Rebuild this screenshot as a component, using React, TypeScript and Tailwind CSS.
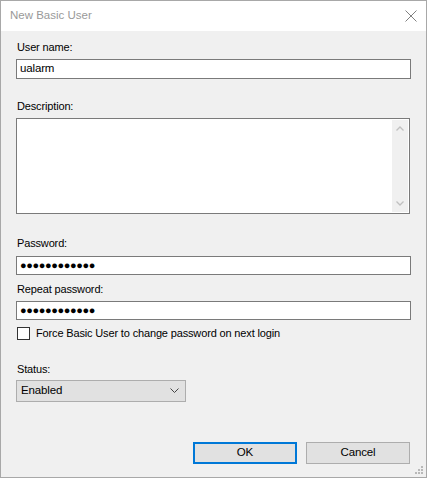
const font = { fontFamily: '"Liberation Sans", Arial, sans-serif' };

function Dots() {
  return <span className="tracking-[-0.4px] text-[11px]">{"●".repeat(12)}</span>;
}

export default function App() {
  return (
    <div
      className="relative w-[427px] h-[478px] border border-[#a8a8a8] bg-[#f0f0f0] text-[11px] tracking-[-0.15px] text-black flex flex-col"
      style={font}
    >
      <div className="h-[30px] bg-white flex items-center justify-between pl-[9px] pr-[9px] shrink-0">
        <span className="text-[11.5px] tracking-[0px] text-[#999999]">New Basic User</span>
        <svg width="12" height="12" viewBox="0 0 12 12">
          <path d="M0.5 0.5 L11.5 11.5 M11.5 0.5 L0.5 11.5" stroke="#808080" strokeWidth="1" />
        </svg>
      </div>

      <div className="flex flex-col px-[15px] pt-[9px]">
        <label className="leading-[14px] pl-[1px]">User name:</label>
        <div className="mt-[5px] h-[20px] w-[395px] border border-[#7a7a7a] bg-white flex items-center pl-[3px] text-[11.5px]">
          ualarm
        </div>

        <label className="mt-[20px] leading-[14px] pl-[1px]">Description:</label>
        <div className="mt-[5px] h-[96px] w-[394px] border border-[#7a7a7a] bg-white flex justify-end p-[1px]">
          <div className="w-[16px] h-full bg-[#f0f0f0] flex flex-col items-center justify-between py-[6px]">
            <svg width="8" height="5" viewBox="0 0 8 5">
              <path d="M0.5 4.5 L4 1 L7.5 4.5" stroke="#c0c0c0" strokeWidth="1.3" fill="none" />
            </svg>
            <svg width="8" height="5" viewBox="0 0 8 5">
              <path d="M0.5 0.5 L4 4 L7.5 0.5" stroke="#c0c0c0" strokeWidth="1.3" fill="none" />
            </svg>
          </div>
        </div>

        <label className="mt-[22px] leading-[14px] pl-[1px]">Password:</label>
        <div className="mt-[6px] h-[19px] w-[395px] border border-[#7a7a7a] bg-white flex items-center pl-[3px]">
          <Dots />
        </div>
        <label className="mt-[7px] leading-[14px] pl-[1px]">Repeat password:</label>
        <div className="mt-[5px] h-[19px] w-[395px] border border-[#7a7a7a] bg-white flex items-center pl-[3px]">
          <Dots />
        </div>

        <div className="mt-[5px] flex items-center pl-[1px]">
          <div className="w-[13px] h-[13px] border border-[#333333] bg-white" />
          <span className="ml-[6px]">Force Basic User to change password on next login</span>
        </div>

        <label className="mt-[20px] leading-[14px] pl-[1px]">Status:</label>
        <div className="mt-[4px] h-[22px] w-[170px] border border-[#adadad] bg-[#e1e1e1] flex items-center justify-between pl-[4px] pr-[6px] text-[11.5px]">
          <span>Enabled</span>
          <svg width="9" height="6" viewBox="0 0 9 6">
            <path d="M0.5 0.5 L4.5 4.5 L8.5 0.5" stroke="#444444" strokeWidth="1" fill="none" />
          </svg>
        </div>
      </div>

      <div className="mt-auto flex justify-end gap-[9px] pr-[16px] pb-[13px]">
        <button className="w-[104px] h-[22px] border-2 border-[#0078d7] bg-[#e1e1e1] text-[11.5px]">OK</button>
        <button className="w-[104px] h-[22px] border border-[#adadad] bg-[#e1e1e1] text-[11.5px]">Cancel</button>
      </div>

      <svg width="9" height="9" viewBox="0 0 9 9" className="absolute right-[2px] bottom-[2px]">
        <rect x="6" y="0" width="2" height="2" fill="#b8b8b8" />
        <rect x="3" y="3" width="2" height="2" fill="#b8b8b8" />
        <rect x="6" y="3" width="2" height="2" fill="#b8b8b8" />
        <rect x="0" y="6" width="2" height="2" fill="#b8b8b8" />
        <rect x="3" y="6" width="2" height="2" fill="#b8b8b8" />
        <rect x="6" y="6" width="2" height="2" fill="#b8b8b8" />
      </svg>
    </div>
  );
}
